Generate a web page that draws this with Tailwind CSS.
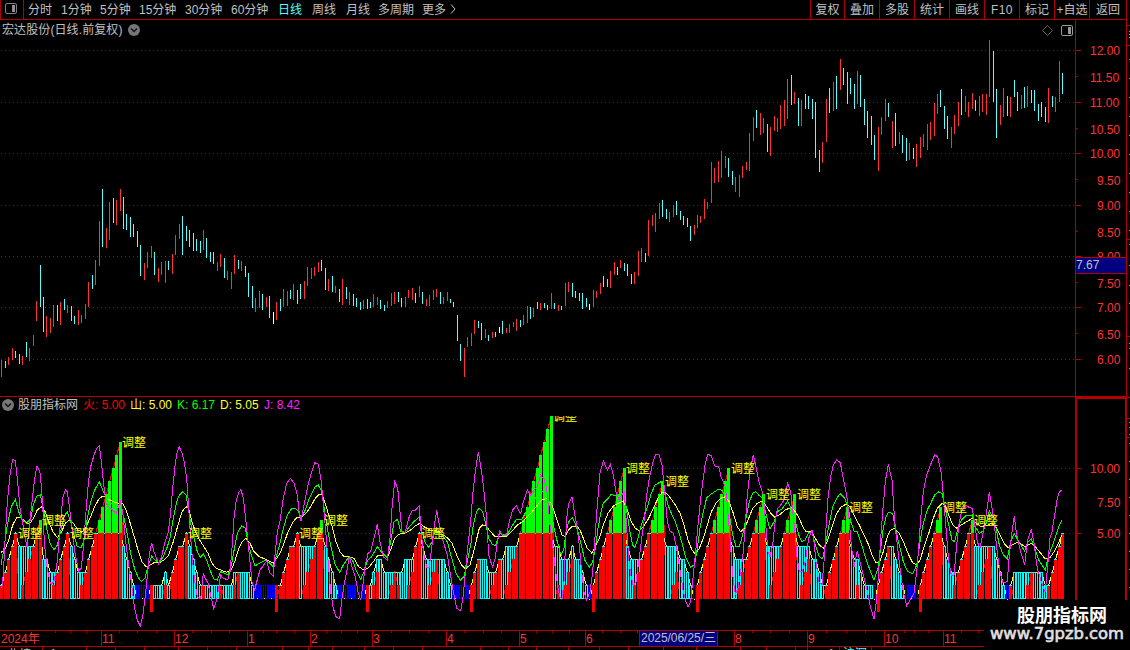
<!DOCTYPE html>
<html lang="zh-CN">
<head>
<meta charset="utf-8">
<title>宏达股份 日线</title>
<script src="https://cdn.jsdelivr.net/npm/@tailwindcss/browser@4"></script>
</head>
<body class="relative w-[1130px] h-[650px] overflow-hidden bg-black text-[12px] leading-none text-[#c0c0c0] font-['Liberation_Sans','Noto_Sans_CJK_SC',sans-serif]">
<div class="flex flex-col h-[650px]">
  <header class="flex h-[20px] w-[1127px] border-b border-[#b00000] whitespace-nowrap">
    <div class="w-[24px] border-x border-[#b00000] flex items-center justify-center pr-[2px] pb-[2px]">
      <svg class="block w-[12px] h-[11px]" viewBox="0 0 12 11"><rect x=".5" y=".5" width="11" height="10" rx="1.5" fill="none" stroke="#808080"/><rect x="7" y="2" width="3" height="7" fill="#909090"/></svg>
    </div>
    <nav class="flex items-center pl-1 h-[20px]">
      <span class="w-[33px]">分时</span><span class="w-[39px]">1分钟</span><span class="w-[39px]">5分钟</span><span class="w-[46px]">15分钟</span><span class="w-[46px]">30分钟</span><span class="w-[47px]">60分钟</span><span class="w-[34px] text-[#54ffff]">日线</span><span class="w-[34px]">周线</span><span class="w-[32px]">月线</span><span class="w-[44px]">多周期</span><span class="w-[28px]">更多</span>
      <svg class="block w-[6px] h-[10px] mb-[2px]" viewBox="0 0 6 10" fill="none" stroke="#c0c0c0"><path d="M1 .5 5 5 1 9.500"/></svg>
    </nav>
    <nav class="ml-auto flex h-[19px] *:border-l *:border-[#b00000] *:flex *:justify-center *:pt-[4px]">
      <span class="w-[34px]">复权</span><span class="w-[35px]">叠加</span><span class="w-[35px]">多股</span><span class="w-[35px]">统计</span><span class="w-[35px]">画线</span><span class="w-[35px] tracking-[.4px]">F10</span><span class="w-[35px]">标记</span><span class="w-[35px]">+自选</span><span class="w-[38px] border-r">返回</span>
    </nav>
  </header>

  <main class="flex h-[610px]">
    <section class="w-[1075px] flex flex-col">
      <div class="h-[20px] flex items-center pl-[2px] pr-[2px]">
        <span class="w-[126px] whitespace-nowrap tracking-[.1px]">宏达股份(日线.前复权)</span>
        <svg class="block w-[12px] h-[12px]" viewBox="0 0 12 12"><circle cx="6" cy="6" r="6" fill="#777"/><path d="M3 4.500 6 7.500 9 4.500" fill="none" stroke="#111" stroke-width="1.500"/></svg>
        <svg class="block ml-auto w-[32px] h-[11px]" viewBox="0 0 32 11" fill="none"><path d="M6.500.500 11.500 5.500 6.500 10.500 1.500 5.500Z" stroke="#909090" stroke-dasharray="1 .4"/><rect x="20.500" y=".500" width="11" height="10" rx="1.500" stroke="#999"/><rect x="27" y="2" width="3" height="7" fill="#999"/></svg>
      </div>
      <svg id="price" class="block w-[1075px] h-[356px]" viewBox="0 40 1075 356" shape-rendering="crispEdges"></svg>
      <div class="h-[20px] border-t border-[#b00000] flex items-start pt-[2px] pl-[2px] whitespace-nowrap">
        <svg class="block w-[12px] h-[12px]" viewBox="0 0 12 12"><circle cx="6" cy="6" r="6" fill="#777"/><path d="M3 4.500 6 7.500 9 4.500" fill="none" stroke="#111" stroke-width="1.500"/></svg>
        <span class="ml-[4px] w-[65px]">股朋指标网</span><span class="w-[47px] text-[#ff0000]">火: 5.00</span><span class="w-[47px] text-[#ffff30]">山: 5.00</span><span class="w-[43px] text-[#00ff00]">K: 6.17</span><span class="w-[44px] text-[#ffff30]">D: 5.05</span><span class="text-[#ff20ff]">J: 8.42</span>
      </div>
      <svg id="kdj" class="block w-[1075px] h-[214px]" viewBox="0 416 1075 214" shape-rendering="crispEdges"></svg>
    </section>
    <svg id="axis" class="block w-[55px] h-[610px]" viewBox="1075 20 55 610" shape-rendering="crispEdges"></svg>
  </main>
  <svg id="dates" class="block w-[1130px] h-[20px]" viewBox="0 630 1130 20" shape-rendering="crispEdges"></svg>
</div>

<div class="absolute left-[984px] top-[600px] w-[146px] h-[50px] bg-black text-white flex flex-col">
  <div class="pl-[33px] mt-[4px] h-[20px] leading-[20px] text-[18px] font-bold font-['Noto_Sans_CJK_SC',sans-serif] whitespace-nowrap">股朋指标网</div>
  <svg class="block w-[146px] h-[22px]" viewBox="0 0 146 22"><text x="6" y="15" textLength="134" lengthAdjust="spacingAndGlyphs" fill="#e4e0e0" stroke="#e4e0e0" stroke-width=".6" class="text-[15px] font-['DejaVu_Sans',sans-serif]">www.7gpzb.com</text></svg>
</div>

<script>
const RED = '#ff3232', LINE = '#b00000';
const X = i => Math.floor(1.75 + i * 3.4787);
const rect = (x, y, w, h, c) => `<rect x="${x}" y="${y}" width="${w}" height="${h}" fill="${c}"/>`;
const text = (x, y, s, c, n) => `<text x="${x}" y="${y}" fill="${c}" font-size="12"${n ? ` textLength="${n}"` : ''}>${s}</text>`;
const dots = y => `<path d="M1 ${y + .5}H1075" stroke="${LINE}" stroke-dasharray="1 3"/>`;

// Candle ranges: [vertical origin, "type high-low ..."], in thirds of a pixel below the origin.
const candles = [
 [180, 'r540-591 c543-564 r531-555 r504-540 c513-534 c522-552 r528-555 c486-531 r504-543 r465-498 r363-423 c255-381 c351-456 r408-471 r414-459 r375-441 c375-423 r366-435 c357-390 r375-399 c378-423 c408-432 r390-435 r405-429 r372-417 r306-381 c285-327 r240-315 r123-258 c27-201 r144-204 r66-180 c54-129 r60-135 r27-93 c51-147 c102-150 c111-171 c132-171 c153-201 c195-288 r249-300 r216-264 r198-234 c216-285 r264-306 r246-285 r243-309 c243-270 r222-282 r165-225 r132-177 c108-225 c138-183 c150-201 c159-213 c177-213 c183-219 r150-210 c174-234 c216-246 c216-252 r246-273 r222-261 c234-294 r273-300 r276-327 r225-282 c240-267 r243-273 c258-291 c279-351 c318-384 r354-396 r333-384 c342-390 r351-381 c348-414 w396-432 r366-420 c357-393 r327-381 r333-378 c330-357 r312-360 c330-372 c312-357 r303-357 r261-318 r264-297 r261-288 r246-276 c240-273 c264-330 r297-333 c288-336 r318-339 c327-366 r297-375 c321-357 r336-375 c342-378 c354-381 c366-390 r360-387 c357-387 c366-384 r342-381 r351-375 c360-387 c375-393 r363-384 r339-378 r336-372 c336-366 c354-381 r351-381 r330-354 r324-360 c339-369 r318-351 c336-372 r357-378 r345-378 r330-360 r327-351 c336-372 r351-372 r336-363 c357-369 c366-381 c405-483 c492-543 r504-591 r471-501 r459-498 r420-462 c423-444 c429-480 r447-474 c465-483 r456-474 c456-471 w441-459 c423-462 r444-459 r432-459 r426-441 r417-453 c420-441 r405-435 r378-429 c381-417 r384-411 c366-387 r369-390 c369-384 c375-390 r339-387 c369-387 r375-393'],
 [140, 'c498-510 r429-498 r426-456 c429-471 c453-474 c459-483 c459-507 c474-501 w492-510 r450-501 r453-474 r429-462 c408-441 c417-441 r393-444 r366-405 c381-405 r360-384 c369-393 c372-408 c402-432 r396-432 r333-408 r324-366 c339-366 r240-348 r225-258 r219-276 r189-237 c180-231 c207-237 r216-246 r195-231 c183-225 c213-240 c228-255 c234-261 c258-303 r255-285 r225-264 r228-249 r177-237 r186-207 r66-189 r84-129 r63-126 r33-114 r48-84 c54-111 c93-135 r111-156 r105-171 r78-114'],
 [60, 'r306-330 r219-333 r171-243 c150-204 r159-225 r174-219 c192-276 r201-288 r168-213 r174-216 r135-207 r120-198 r57-177 c45-135 r96-132 c114-198'],
 [30, 'r210-288 c192-237 c198-237 c207-267 c216-384 c360-426 r336-399 r207-336 c174-249 r156-243 c138-237 r87-180 c114-165 c126-222 c144-192 c162-237 r123-222 c135-231 c207-285 c243-324 c258-345 c315-390 r291-423 r261-315 r207-273 c219-261 r273-354 c249-348 r306-342 c315-369 c324-393 r339-390 c354-387 r342-411 r321-384 r312-351 r282-360 r276-330 r219-318 r192-252 c180-231 c228-297 c258-327 r291-354 r255-312 r216-288 c177-255 r198-246 r216-261 r189-237 c210-243 r198-258 r192-246 r192-255 r30-201 c63-216 c177-324 r225-285 r174-261 c198-258 r201-261 c150-201 c186-243 r195-237 c171-234 r168-231 c180-219 c180-243 c222-273 c216-261 c231-276 r174-279 c198-231 r201-246 r93-216 c129-192']
];
const hue = { r: RED, c: '#54ffff', w: '#fff' };
let out = [50, 102, 153, 205, 256, 307, 359].map(dots).join(''), k = 0;
for (const [top, list] of candles)
  for (const t of list.split(' ')) {
    const [a, b] = t.slice(1).split('-').map(Number);
    out += rect(X(k++), top + Math.round(a / 3), 1, Math.round((b - a) / 3), hue[t[0]]);
  }
document.getElementById('price').innerHTML = out;

// Bars: "n" rising count, "mcN" hollow bar of m with N rising inside, "b" blue, "x" start signal.
const bars = ('1 2 3 4 5 4c 4c1 4c2 4c3 4 5 6 3c 3c 2c 2c1 2 3 4 5 4c 3c 2c 2c1 2 3 4 5 6 7 8 9 10 11 12 4c 3c 2c 1c b b b b x 1c 1c 1c 2c1 1c 2 3 4 4 5 4c 3c 2c 1c 1 1c 1c 1c 1c 1 1c 1c 1c 2c1 2 2c 2c 2c 1c b b b b b b x ' +
 '1 2 3 4 4 5 4c 4c1 4c2 4c3 4 5 6 4c 3c 2c 1c b b b b b b b b x 1c 2c1 3c2 3c 2c 2c 2c1 2 2c1 2c 3c 3c1 3c2 4 5 4c 3c 3c1 3c2 3 3c 3c 2c 1c b b b b b x 2 3 3c 3c 2c 2c1 2 3 3c 4c1 4c2 4c3 4 5 6 7 8 9 10 11 12 13 14 4c 4c1 ' +
 '3c 3c1 3c2 4c3 3c 3c 2c 1c b x 2 3 4 5 6 7 8 9 10 4c 3c 3c1 3c2 3 4 5 6 7 8 9 4c 4c 4c1 4c2 3c 3c 2c 1c b x 2 3 4 5 6 7 8 9 10 4c 3c 3c1 3c2 3 4 5 6 7 8 4c 4c1 4c2 4c3 4 5 6 7 8 4c ' +
 '4c1 4c2 4c3 3c 3c 2c 1c 1 2 3 4 5 6 7 4c 3c 3c1 2c 1c 1c 1c b x 2 3 4 4c 3c 2c 1c b b b b x 2 3 4 5 6 7 4c 3c 2c 2c1 2 3 4 5 6 4c 4c1 4c2 4c3 4 4c 3c 2c 1c b 1 2c 2c 2c 2c 2c1 2 2c 2c 2c 1c 1 2 3 4 5').split(' ');
const Y = v => 598 - 13 * v;
let solid = '', envelope = [], rise = [];
bars.forEach((t, i) => {
  const x = X(i), hollow = t.includes('c'), n = hollow ? +t.split('c')[1] : +t || 0, v = parseInt(t) || 1;
  envelope.push(`${x + .5},${Y(Math.min(v, t === 'b' ? 0 : 5)) + .5}`);
  rise.push(`${x + .5},${Y(n) + .5}`);
  if (t === 'b' || hollow) solid += `<rect x="${x - .5}" y="${Y(v) + .5}" width="2" height="${13 * v}" fill="#000" stroke="${hollow ? '#00ffff' : '#0000ff'}"/>`;
  if (n) solid += rect(x - 1, Y(Math.min(n, 5)), 3, 13 * Math.min(n, 5) + 1, '#ff0000');
  if (n && n < 6 && !hollow) solid += rect(x - 1, Y(n), 3, 1, '#00ffff');
  if (n > 5) solid += rect(x - 1, Y(n), 3, 13 * (n - 5), '#00ff00');
  if (t === 'x') solid += rect(x - 1, 585, 3, 27, '#ff0000');
});

// Indicator curves: [horizontal origin, "x,y ..."], both in thirds of a pixel.
const curves = {
 '#ffff30': [[0, '3,472 14,465 26,435 38,390 50,368 62,368 74,378 88,388 100,370 112,345 124,335 136,350 148,385 160,412 172,428 184,412 196,385 208,375 220,385 234,405 246,412 258,395 270,370 284,335 298,310 310,303 324,313 340,320 355,325 368,325 380,350 394,395 404,430 414,465 426,500 438,515 450,510 462,503 478,503 492,495 506,480 520,440 534,390 546,350 558,335 566,340 576,380 588,415 602,440 612,455 624,475 636,505 648,520 662,525 680,532 694,525 704,500 716,460 728,438 738,430 750,445 762,470 778,485 797,493 820,505'],
  [840, '0,475 12,445 24,410 38,382 50,368 64,368 78,355 92,335 106,310 118,298 126,297 134,320 146,360 158,400 168,440 180,470 192,485 208,485 222,490 236,515 250,524 264,520 280,500 294,480 310,480 322,487 334,460 344,430 356,418 374,414 392,405 406,392 420,385 432,395 450,405 462,405 478,410 490,420 504,430 516,445 530,480 544,510 556,522 570,510 578,480 588,440 598,400 608,390 617,392 630,408 645,425 660,424 682,423 696,408 712,390 728,380 742,365 758,348 772,330 786,315 800,310 814,325 826,360 838,395'],
  [1620, '66,420 76,425 86,405 98,393 110,393 120,405 130,430 142,460 155,474 166,455 178,430 190,390 204,355 220,333 236,325 250,318 262,345 274,380 286,400 298,408 312,392 326,370 340,340 354,310 366,292 378,293 392,310 406,330 420,355 432,390 444,435 456,465 466,478 478,460 490,430 502,390 514,350 528,325 542,310 556,305 568,320 580,355 592,395 602,410 614,400 626,370 638,340 652,325 668,318 680,335 692,355 704,367 720,358 736,345 754,337 766,350 778,370 788,395 798,410'],
  [2400, '36,410 46,430 58,450 70,460 82,440 96,395 110,355 124,335 138,328 150,335 164,365 178,390 192,420 206,450 218,485 228,503 238,505 250,470 262,425 272,405 284,400 298,415 312,445 326,480 338,503 350,510 360,495 374,450 388,410 400,370 412,340 426,325 436,330 446,360 458,390 468,400 484,390 500,380 517,370 528,385 544,395 560,392 575,385 588,395 600,420 612,445 624,458 640,448 655,440 674,455 694,445 706,455 722,475 736,492 750,488 762,470 775,445 786,420']],
 '#00ff00': [[0, '3,510 12,460 22,390 34,335 46,313 56,350 66,375 80,385 92,370 100,330 110,303 121,300 130,340 140,400 150,445 162,465 172,450 182,410 192,365 202,350 212,380 222,420 232,455 244,457 254,430 262,370 272,320 284,285 298,260 308,285 320,310 334,325 348,340 361,335 372,370 384,430 394,485 405,525 416,550 425,560 435,548 445,510 455,484 465,495 478,503 490,485 502,455 510,430 520,370 530,320 538,300 548,290 558,300 566,350 574,395 582,430 592,470 602,488 610,475 620,495 632,530 641,552 652,555 662,530 670,533 685,540 695,505 704,455 712,415 725,392 736,400 744,440 754,480 765,513 778,505 797,495 810,505 820,515 830,480'],
  [840, '0,445 10,400 22,360 34,342 46,340 56,350 63,370 76,345 86,315 98,290 106,275 115,270 125,290 134,350 144,410 154,460 166,510 179,532 190,510 200,495 208,485 220,500 230,530 242,553 252,530 262,497 275,485 292,455 304,470 322,488 332,440 342,380 353,373 362,410 374,414 388,395 400,382 418,365 426,410 436,445 446,457 456,440 464,410 478,415 490,425 502,440 515,490 528,535 541,556 552,545 560,510 572,450 580,390 590,350 597,338 608,350 618,390 626,430 636,447 646,452 659,415 670,422 682,420 692,400 709,373 725,375 738,350 752,330 766,310 782,290 800,290 812,340 822,400 832,440 840,470'],
  [1620, '64,480 72,460 78,410 86,380 97,368 106,385 114,410 124,450 134,495 148,517 158,500 166,460 174,400 184,345 190,325 202,313 214,298 226,302 240,300 253,295 262,360 270,410 278,450 284,457 294,430 304,390 314,360 324,330 334,295 345,270 362,260 374,290 384,330 396,360 406,380 416,410 426,445 438,490 452,517 464,508 472,460 480,400 490,350 500,308 514,297 524,290 536,282 548,288 558,310 568,360 578,420 588,455 598,455 608,420 618,370 628,320 638,295 648,290 658,302 668,310 676,350 690,403 702,380 712,350 726,342 743,318 756,345 766,380 776,420 786,440 796,435 806,412'],
  [2400, '36,412 46,450 58,485 68,492 76,450 86,395 98,335 110,310 121,296 134,310 144,335 152,380 162,408 172,410 182,440 194,480 208,520 222,556 234,520 242,460 250,400 258,365 265,352 278,355 286,400 298,450 310,500 322,528 338,537 350,510 360,440 370,385 382,345 392,325 404,300 416,290 426,295 434,330 444,380 456,435 464,440 474,400 484,375 498,362 517,360 526,395 538,415 550,408 560,380 568,348 578,365 588,400 598,450 610,480 622,492 632,440 643,415 656,440 674,468 684,440 694,432 704,460 716,495 736,525 746,480 756,455 768,420 776,395 786,375']],
 '#ff20ff': [[0, '5,580 10,540 15,440 22,320 30,240 38,193 46,197 52,250 60,340 68,385 76,430 81,455 88,400 96,320 104,250 111,212 121,235 128,330 133,440 140,510 150,562 156,568 163,555 172,500 180,400 188,310 196,284 202,290 210,350 218,420 226,480 236,528 244,520 250,460 258,350 265,265 272,215 282,180 290,160 298,152 304,200 312,275 318,325 328,337 338,345 348,357 355,335 361,320 368,350 376,430 386,510 395,570 403,635 412,675 421,693 428,665 435,610 442,545 448,480 455,443 462,470 476,507 486,480 495,440 505,412 512,350 518,280 526,205 532,170 538,155 546,175 553,200 560,250 566,340 572,430 578,500 584,560 592,605 602,612 610,535 616,550 624,565 634,610 641,640 650,615 662,540 668,548 683,555 690,530 697,450 702,370 708,320 716,292 723,284 730,310 738,380 744,440 750,500 756,560 764,585 770,560 780,525 790,512 800,497 810,535 820,543 826,470 832,410'],
  [840, '0,378 10,310 20,265 31,250 42,265 52,300 58,355 63,378 72,330 84,270 94,235 104,203 115,207 124,260 132,350 138,420 146,520 152,590 160,640 168,665 179,672 186,610 192,570 200,530 208,485 216,515 226,545 234,590 242,615 250,560 256,510 264,475 272,470 282,430 292,388 300,440 310,485 322,495 330,430 336,340 344,260 353,280 360,350 366,410 376,412 386,370 396,347 407,345 418,332 424,420 432,480 440,517 448,517 456,450 462,400 470,345 478,390 486,430 496,460 502,480 510,530 520,590 530,640 542,648 550,600 558,510 566,430 572,380 578,300 586,230 595,170 600,200 606,240 612,290 618,350 622,410 626,480 632,500 638,515 646,490 652,440 659,408 666,420 680,418 688,380 698,345 709,332 722,356 730,320 742,285 752,300 762,285 772,275 782,240 792,253 800,280 810,390 818,450 826,520 834,580'],
  [1620, '60,605 66,612 72,560 76,460 80,370 86,325 96,305 102,345 110,390 118,450 124,520 132,590 140,615 150,590 158,530 164,440 172,330 180,235 190,197 202,225 211,208 220,240 228,290 238,318 245,300 253,292 260,400 266,490 272,540 280,572 288,560 296,500 304,440 312,380 320,300 328,250 338,205 347,178 357,180 366,210 374,290 382,380 390,408 400,415 408,450 416,500 424,550 430,590 438,620 444,635 452,620 460,540 468,460 474,390 482,310 490,250 496,205 503,178 514,182 524,213 536,215 543,245 556,275 562,330 570,430 578,540 586,598 594,580 602,530 610,470 616,390 622,300 630,230 640,180 650,225 658,265 670,300 678,400 684,470 690,485 698,450 704,390 712,342 722,330 732,315 743,265 752,290 758,350 764,400 770,480 778,530 786,530 796,500 806,430'],
  [2400, '36,405 42,440 48,500 56,560 66,570 72,500 78,400 84,310 92,245 100,210 110,195 121,203 130,250 140,300 146,360 154,450 162,515 172,468 180,500 190,540 200,580 210,630 222,672 230,610 236,530 242,430 248,350 256,260 265,208 276,255 284,380 292,450 300,520 310,590 320,632 330,615 342,595 350,530 356,460 362,370 370,290 380,240 392,208 404,180 413,185 424,235 430,300 438,400 446,500 454,540 462,540 470,450 478,380 486,345 498,330 508,338 517,340 524,390 532,440 540,460 550,410 560,350 568,290 576,340 584,400 590,460 600,530 608,563 622,560 628,480 636,410 643,362 650,420 658,455 668,490 674,510 682,440 694,402 702,445 712,520 724,560 736,592 744,500 750,430 756,410 764,360 772,310 778,290 786,285']]
};
const line = (pts, c) => `<polyline points="${pts}" fill="none" stroke="${c}"/>`;
let lines = '';
for (const [c, parts] of Object.entries(curves))
  lines += line(parts.flatMap(([o, s]) => s.split(' ').map(p => { const [a, b] = p.split(',').map(Number); return `${((a + o) / 3).toFixed(1)},${(395 + b / 3).toFixed(1)}`; })).join(' '), c);
const marks = [[122,442],[18,533],[42,520],[70,533],[188,533],[299,533],[324,520],[421,533],[553,416],[626,468],[665,481],[731,468],[766,494],[797,494],[849,507],[943,507],[974,520]];
document.getElementById('kdj').innerHTML = dots(468) + dots(533) + line(rise.join(' '), '#ff0000') + line(envelope.join(' '), '#ffff30') + solid + lines + marks.map(([x, y]) => text(x, y + 5, '调整', '#ffff00')).join('');

let ax = rect(1075, 20, 1, 378, LINE) + rect(1126, 20, 1, 580, LINE);
[50, 102, 153, 205, 256, 307, 359].forEach((y, i) => ax += rect(1076, y, 5, 1, LINE) + text(i < 3 ? 1090 : 1097, y + 5, (12 - i) + '.00', RED));
[76, 128, 179, 231, 282, 333].forEach((y, i) => ax += rect(1076, y, 2, 1, LINE) + text(i < 2 ? 1090 : 1097, y + 6, (11.5 - i).toFixed(2), RED));
ax += rect(1076, 257, 50, 17, LINE) + rect(1076, 258, 50, 15, '#000080') + text(1076, 269, '7.67', '#c0c0c0');
ax += rect(1075, 396, 52, 1, LINE) + rect(1076, 397, 51, 2, LINE) + rect(1075, 397, 2, 203, LINE) + rect(1125, 397, 2, 203, LINE);
[[468, '10.00', 1090], [502, '7.50', 1097], [533, '5.00', 1097]].forEach(([y, s, x], i) => ax += rect(1077, i === 1 ? 501 : y, i === 1 ? 1 : 4, 1, LINE) + text(x, y + 5, s, RED));
[25, 45, 239, 336, 397, 418, 437].forEach(y => ax += rect(1127, y, 3, 1, LINE));
[31, 34, 37, 59, 78, 97, 116, 135, 154, 173, 192, 211, 230, 244, 265, 285, 303, 343, 348, 368, 422, 427, 434, 443, 461, 479, 497, 515, 533, 551, 569, 587].forEach(y => ax += rect(1129, y, 1, 1, '#aaa'));
document.getElementById('axis').innerHTML = ax;

let dt = rect(0, 630, 984, 1, LINE) + rect(0, 646, 984, 1, LINE) + rect(640, 631, 77, 15, '#000080') + text(641, 642, '2025/06/25/三', '#c0c0c0', 75);
[101, 174, 247, 310, 372, 446, 519, 585, 639, 717, 734, 807, 884, 943].forEach(x => dt += rect(x, 631, 1, 15, LINE));
[55, 70, 86, 119, 137, 156, 192, 211, 229, 263, 276, 294, 326, 341, 357, 391, 409, 428, 464, 483, 501, 536, 552, 569, 602, 620, 637, 752, 770, 789, 826, 846, 865, 904, 914, 928, 961, 978].forEach(x => dt += rect(x, 631, 1, 2, LINE));
[42, 86, 115, 144, 178, 207, 236, 282, 308, 332, 364, 393, 422, 480, 508, 536, 568, 599, 628, 663, 696, 740, 766, 795, 807, 839, 871].forEach(x => dt += rect(x, 647, 1, 3, LINE));
[[1, '2024年'], [102, '11'], [175, '12'], [248, '1'], [311, '2'], [373, '3'], [447, '4'], [520, '5'], [586, '6'], [735, '8'], [808, '9'], [885, '10'], [944, '11']].forEach(([x, s]) => dt += text(x, 643, s, RED));
dt += text(7, 659, '业绩', '#c0c0c0') + text(50, 658, '1', '#c0c0c0') + text(828, 658, '1', '#c0c0c0') + text(843, 658, '沪深', '#54ffff');
document.getElementById('dates').innerHTML = dt;
</script>
</body>
</html>
